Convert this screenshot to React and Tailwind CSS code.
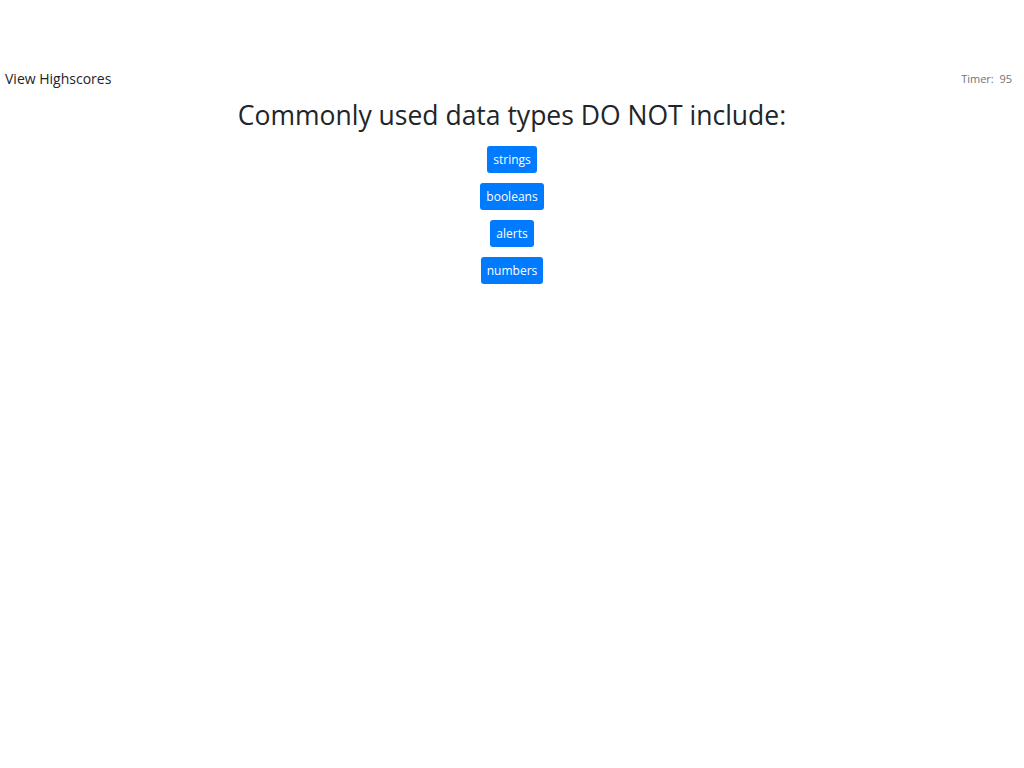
import React from "react";

const choices = ["strings", "booleans", "alerts", "numbers"];

export default function App() {
  return (
    <div className="min-h-screen bg-white text-[#212529]" style={{ fontFamily: '"Open Sans", "Noto Sans", sans-serif' }}>
      <div className="pt-[67px] flex items-center justify-between pl-[5px] pr-[12px]">
        <a className="text-[14px] leading-6 text-[#212529]">View Highscores</a>
        <span className="text-[11px] text-[#6c757d]">Timer:&nbsp; 95</span>
      </div>
      <div className="flex flex-col items-center">
        <h2 className="text-[26.5px] leading-[38px] mt-[5px] mb-[12px]">Commonly used data types DO NOT include:</h2>
        {choices.map((c) => (
          <button
            key={c}
            className="bg-[#007bff] text-white text-[12px] leading-[19px] px-[6px] py-1 rounded-[3px] mb-[10px]"
          >
            {c}
          </button>
        ))}
      </div>
    </div>
  );
}
